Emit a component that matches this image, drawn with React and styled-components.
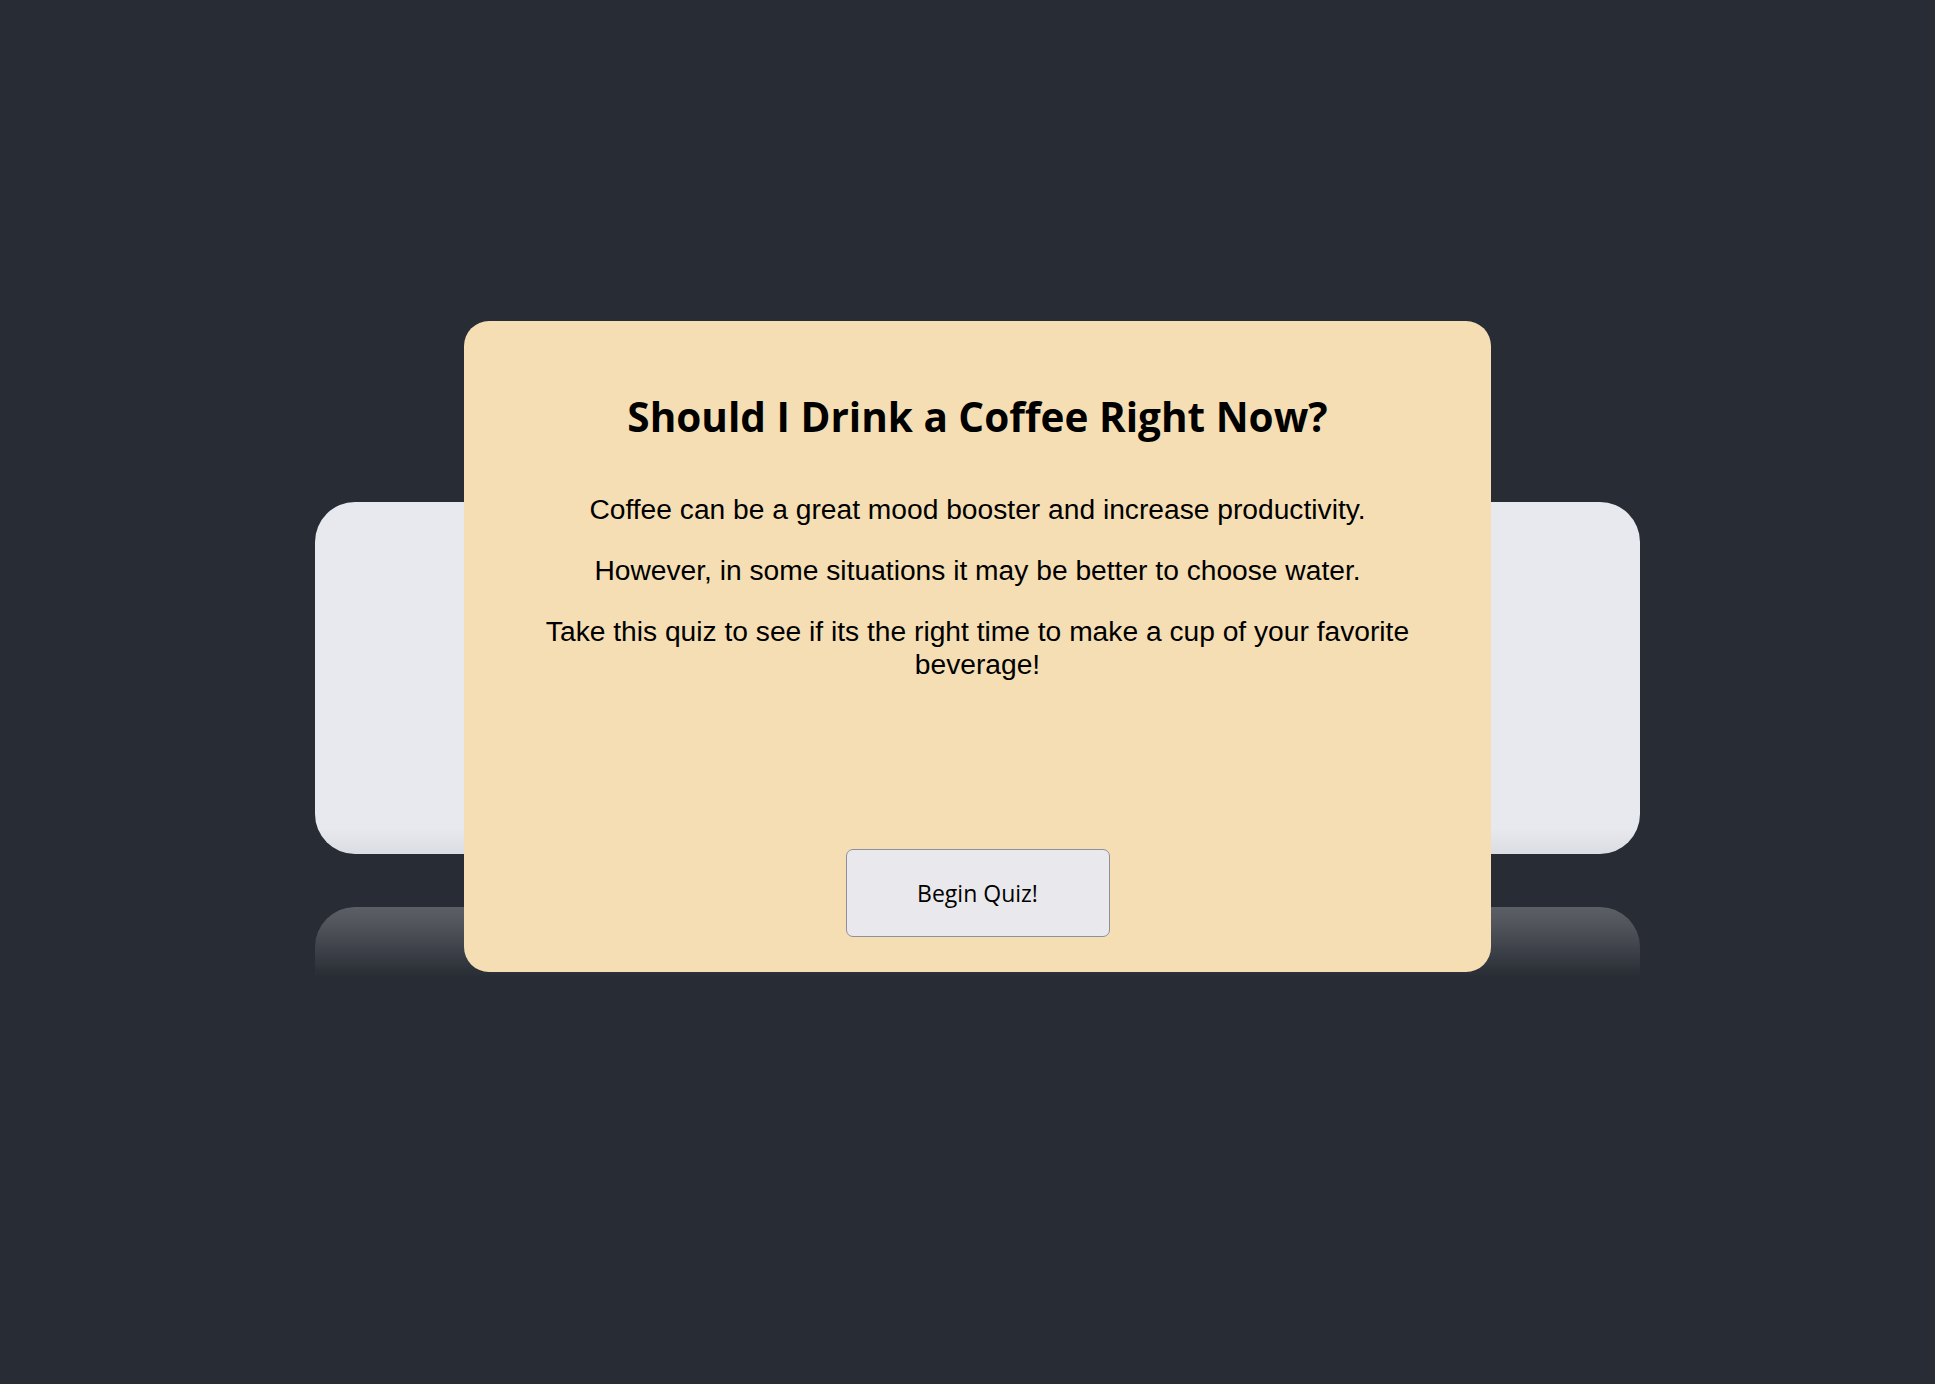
import React from 'react'
import styled, { createGlobalStyle } from 'styled-components'

const GlobalStyle = createGlobalStyle`
  html, body {
    margin: 0;
    padding: 0;
    background-color: #282c34;
  }
  body {
    font-family: "Liberation Sans", Arial, sans-serif;
  }
`;

const Page = styled.div`
  min-height: 100vh;
  box-sizing: border-box;
  display: flex;
  justify-content: center;
  align-items: flex-start;
  padding: 321px 0 0 20px;
`;

const Stage = styled.div`
  display: grid;
  width: 1325px;
`;

const Backdrop = styled.div`
  grid-area: 1 / 1;
  align-self: start;
  margin-top: 181px;
  height: 352px;
  border-radius: 40px;
  background: linear-gradient(to bottom, #e8e9ee calc(100% - 26px), #dcdde3);
  -webkit-box-reflect: below 53px linear-gradient(transparent 80%, rgba(255, 255, 255, 0.29));
`;

const Card = styled.div`
  grid-area: 1 / 1;
  justify-self: center;
  position: relative;
  z-index: 1;
  width: 1027px;
  height: 651px;
  box-sizing: border-box;
  padding: 68px 60px 35px;
  border-radius: 25px;
  background-color: #f5deb3;
  display: flex;
  flex-direction: column;
  align-items: center;
  text-align: center;
  color: #000;
`;

const Title = styled.h1`
  margin: 0 0 48px;
  font-family: "Open Sans", "Noto Sans", sans-serif;
  font-weight: 700;
  font-size: 40.5px;
  line-height: 56px;
`;

const Text = styled.p`
  margin: 0 0 28px;
  font-size: 28.2px;
  line-height: 33px;
`;

const Button = styled.button`
  margin-top: auto;
  width: 264px;
  height: 88px;
  border: 1px solid #8f8f9d;
  border-radius: 7px;
  background-color: #e9e9ed;
  color: #000;
  font-family: "Open Sans", "Noto Sans", sans-serif;
  font-size: 23px;
  cursor: pointer;
`;

export default function App() {
  return (
    <>
      <GlobalStyle />
      <Page>
        <Stage>
          <Backdrop />
          <Card>
            <Title>Should I Drink a Coffee Right Now?</Title>
            <Text>Coffee can be a great mood booster and increase productivity.</Text>
            <Text>However, in some situations it may be better to choose water.</Text>
            <Text>Take this quiz to see if its the right time to make a cup of your favorite beverage!</Text>
            <Button>Begin Quiz!</Button>
          </Card>
        </Stage>
      </Page>
    </>
  )
}
